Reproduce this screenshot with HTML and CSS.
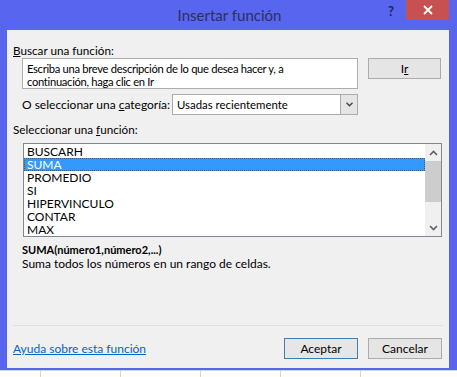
FILE: index.html
```html
<!DOCTYPE html>
<html lang="es">

<head>
    <meta charset="UTF-8">
    <title>Insertar función</title>
    <link rel="stylesheet" href="styles.css">
</head>

<body>
    <div class="window">
        <!-- barra de título -->
        <div class="titlebar">
            <span></span>
            <div class="title">Insertar función</div>
            <div class="controls">
                <span class="help">?</span>
                <span class="close">
                    <svg width="10" height="10" viewBox="0 0 10 10">
                        <path d="M1 1 L9 9 M9 1 L1 9" stroke="#fff" stroke-width="1.8" />
                    </svg>
                </span>
            </div>
        </div>

        <div class="client">
            <div class="label first"><u>B</u>uscar una función:</div>
            <div class="search-row">
                <div class="textbox">Escriba una breve descripción de lo que desea hacer y, a<br>continuación, haga clic en Ir</div>
                <button class="btn go">I<u>r</u></button>
            </div>

            <div class="category-row">
                <span class="category-label">O seleccionar una <u>c</u>ategoría:</span>
                <div class="select">
                    <span class="select-text">Usadas recientemente</span>
                    <span class="drop">
                        <svg width="7" height="5" viewBox="0 0 7 5">
                            <path d="M0.5 0.8 L3.5 3.8 L6.5 0.8" fill="none" stroke="#444" stroke-width="1.4" />
                        </svg>
                    </span>
                </div>
            </div>

            <div class="label second">Seleccionar una <u>f</u>unción:</div>
            <div class="listbox">
                <ul class="items">
                    <li>BUSCARH</li>
                    <li class="selected">SUMA</li>
                    <li>PROMEDIO</li>
                    <li>SI</li>
                    <li>HIPERVINCULO</li>
                    <li>CONTAR</li>
                    <li>MAX</li>
                </ul>
                <div class="scrollbar">
                    <span class="arrow">
                        <svg width="9" height="6" viewBox="0 0 9 6">
                            <path d="M1 5 L4.5 1.5 L8 5" fill="none" stroke="#606060" stroke-width="1.6" />
                        </svg>
                    </span>
                    <span class="thumb"></span>
                    <span class="track"></span>
                    <span class="arrow">
                        <svg width="9" height="6" viewBox="0 0 9 6">
                            <path d="M1 1 L4.5 4.5 L8 1" fill="none" stroke="#606060" stroke-width="1.6" />
                        </svg>
                    </span>
                </div>
            </div>

            <div class="syntax">SUMA(número1,número2,...)</div>
            <div class="desc">Suma todos los números en un rango de celdas.</div>

            <div class="sep"></div>
            <div class="footer">
                <a class="help-link">Ayuda sobre esta función</a>
                <div class="buttons">
                    <button class="btn default">Aceptar</button>
                    <button class="btn">Cancelar</button>
                </div>
            </div>
        </div>
    </div>

    <!-- hoja de cálculo detrás -->
    <div class="sheet">
        <span></span><span></span><span></span><span></span><span></span><span></span>
    </div>
</body>

</html>
```

FILE: styles.css
```css
* {
    margin: 0;
    padding: 0;
    box-sizing: border-box;
}

body {
    width: 457px;
    height: 377px;
    overflow: hidden;
    background-color: #fff;
    font-family: "Segoe UI", Lato, sans-serif;
    font-size: 12px;
    color: #000;
}

.window {
    width: 457px;
    height: 370px;
    background-color: #5865ee;
    padding: 0 8px 2px 7px;
    display: flex;
    flex-direction: column;
}

.titlebar {
    height: 30px;
    display: grid;
    grid-template-columns: 1fr auto 1fr;
    align-items: start;
    margin: 0 -8px 0 -7px;
}

.title {
    font-size: 15px;
    color: #2c2f63;
    line-height: 30px;
    padding-left: 2px;
}

.controls {
    display: flex;
    justify-content: flex-end;
    align-items: flex-start;
}

.help {
    font-weight: bold;
    font-size: 13px;
    color: #1f2450;
    line-height: 22px;
    margin-right: 12px;
}

.close {
    width: 43px;
    height: 20px;
    background-color: #c75050;
    margin-right: 8px;
    display: flex;
    align-items: center;
    justify-content: center;
}

.client {
    height: 338px;
    background-color: #f0f0f0;
    padding: 0 6px 9px 6px;
    display: flex;
    flex-direction: column;
}

.label {
    line-height: 15px;
    font-size: 11.7px;
}

.label.first {
    margin-top: 13px;
}

.label.second {
    margin-top: 7px;
}

.search-row {
    display: flex;
    align-items: flex-start;
    margin-left: 9px;
}

.textbox {
    width: 336px;
    height: 31px;
    background-color: #fff;
    border: 1px solid #abadb3;
    padding: 3px 4px;
    font-size: 11.2px;
    letter-spacing: -0.3px;
    line-height: 13px;
    white-space: nowrap;
    overflow: hidden;
}

.btn {
    width: 74px;
    height: 21px;
    font-family: inherit;
    font-size: inherit;
    color: #000;
    background-color: #e5e5e5;
    border: 1px solid #acacac;
}

.btn.go {
    width: 73px;
    margin-left: 10px;
}

.btn.default {
    border-color: #3c7fb1;
    background-color: #e6e6e6;
}

.category-row {
    display: flex;
    align-items: center;
    margin: 5px 0 0 9px;
    height: 21px;
}

.category-label {
    width: 150px;
    white-space: nowrap;
}

.select {
    width: 186px;
    height: 21px;
    background-color: #fff;
    border: 1px solid #acacac;
    display: flex;
    align-items: center;
}

.select-text {
    flex: 1;
    padding-left: 4px;
    font-size: 11.4px;
}

.drop {
    width: 17px;
    height: 19px;
    background-color: #e5e5e5;
    border-left: 1px solid #acacac;
    display: flex;
    align-items: center;
    justify-content: center;
}

.listbox {
    width: 419px;
    height: 94px;
    margin: 6px 0 0 10px;
    background-color: #fff;
    border: 1px solid #828790;
    display: flex;
}

.items {
    list-style: none;
    flex: 1;
    padding-top: 1px;
}

.items li {
    height: 13px;
    line-height: 13px;
    padding-left: 3px;
}

.items li.selected {
    background-color: #3399ff;
    color: #fff;
    outline: 1px dotted #555;
    outline-offset: -1px;
}

.scrollbar {
    width: 16px;
    background-color: #f0f0f0;
    display: flex;
    flex-direction: column;
}

.arrow {
    height: 17px;
    display: flex;
    align-items: center;
    justify-content: center;
}

.thumb {
    height: 41px;
    background-color: #cdcdcd;
}

.track {
    flex: 1;
}

.syntax {
    font-weight: bold;
    font-size: 11px;
    line-height: 14px;
    margin: 6px 0 0 9px;
}

.desc {
    line-height: 14px;
    margin-left: 9px;
}

.sep {
    margin-top: auto;
    height: 1px;
    background-color: #dfdfdf;
}

.footer {
    margin-top: 12px;
    display: flex;
    align-items: center;
    justify-content: space-between;
}

.help-link {
    color: #0066cc;
    text-decoration: underline;
    cursor: pointer;
}

.buttons {
    display: flex;
    gap: 10px;
    margin-right: 1px;
}

.sheet {
    height: 7px;
    display: flex;
    background-color: #fff;
    border-top: 1px solid #d4d4d4;
}

.sheet span {
    width: 80px;
    height: 100%;
    border-left: 1px solid #d4d4d4;
}

.sheet span:first-child {
    width: 40px;
    border-left: none;
}
```
